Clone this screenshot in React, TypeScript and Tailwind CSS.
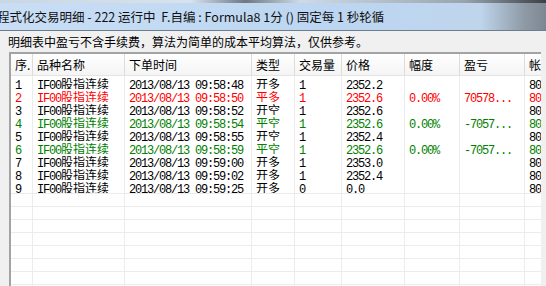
import React from 'react';

type Row = {
  no: string;
  time: string;
  kind: string;
  qty: string;
  price: string;
  range?: string;
  pnl?: string;
  color: string;
};

const rows: Row[] = [
  { no: '1', time: '2013/08/13 09:58:48', kind: '开多', qty: '1', price: '2352.2', color: 'text-black' },
  { no: '2', time: '2013/08/13 09:58:50', kind: '平多', qty: '1', price: '2352.6', range: '0.00%', pnl: '70578...', color: 'text-[#ff0000]' },
  { no: '3', time: '2013/08/13 09:58:52', kind: '开空', qty: '1', price: '2352.6', color: 'text-black' },
  { no: '4', time: '2013/08/13 09:58:54', kind: '平空', qty: '1', price: '2352.6', range: '0.00%', pnl: '-7057...', color: 'text-[#008000]' },
  { no: '5', time: '2013/08/13 09:58:55', kind: '开空', qty: '1', price: '2352.4', color: 'text-black' },
  { no: '6', time: '2013/08/13 09:58:59', kind: '平空', qty: '1', price: '2352.6', range: '0.00%', pnl: '-7057...', color: 'text-[#008000]' },
  { no: '7', time: '2013/08/13 09:59:00', kind: '开多', qty: '1', price: '2353.0', color: 'text-black' },
  { no: '8', time: '2013/08/13 09:59:02', kind: '开多', qty: '1', price: '2352.4', color: 'text-black' },
  { no: '9', time: '2013/08/13 09:59:25', kind: '开多', qty: '0', price: '0.0', color: 'text-black' },
];

const headers = ['序.', '品种名称', '下单时间', '类型', '交易量', '价格', '幅度', '盈亏', '帐'];

const cols = 'grid grid-cols-[22px_92px_127px_43px_47px_63px_55px_65px_16px]';

// latin runs in a narrow mono face, CJK runs in the CJK face
function T({ s }: { s?: string }) {
  if (!s) return null;
  const parts = s.split(/([\x00-\x7F]+)/).filter(Boolean);
  return (
    <>
      {parts.map((p, i) =>
        /^[\x00-\x7F]+$/.test(p) ? (
          <span key={i} className="font-['Liberation_Mono',monospace] text-[12px] leading-[13px] tracking-[-1.2px] whitespace-pre">
            {p}
          </span>
        ) : (
          <span key={i} className="font-['Noto_Sans_CJK_SC',sans-serif] text-[12px] leading-[13px]">
            {p}
          </span>
        )
      )}
    </>
  );
}

function Cell({ children, last }: { children?: React.ReactNode; last?: boolean }) {
  return (
    <div
      className={`h-[13px] overflow-hidden whitespace-nowrap pl-[4px] leading-[13px] ${
        last ? '' : 'border-r border-[#ececec]'
      }`}
    >
      {children}
    </div>
  );
}

export default function App() {
  return (
    <div className="h-[286px] w-[546px] overflow-hidden bg-[#f0f0f0] font-['Noto_Sans_CJK_SC',sans-serif]">
      <div className="h-[3px] bg-[linear-gradient(to_right,#c9d6e3,#d8e2ec_35%,#6f7882_45%,#cfdae6_55%,#9aa4ae_85%,#3c4046)]" />
      <div className="flex h-[27px] items-center overflow-hidden whitespace-nowrap bg-[linear-gradient(to_right,#c9def5,#bcd6f1_60%,#bfd5ec_88%,#8e9aa6_96%,#7d8792)] text-[12.5px] leading-[27px] text-[#111]">
        <span className="-ml-[3px]">程式化交易明细 - 222 运行中&nbsp;&nbsp;F.自编 : Formula8 1分 () 固定每 1 秒轮循</span>
      </div>
      <div className="h-px bg-[#6d7d8e]" />
      <div className="h-[21px] pl-[8px] text-[12px] leading-[21px] text-black">
        明细表中盈亏不含手续费，算法为简单的成本平均算法，仅供参考。
      </div>
      <div className="ml-[9px] w-[532px] border-l-2 border-t-2 border-[#a3a3a3] bg-white">
        <div className={`${cols} h-[22px] border-b border-[#e3e3e3] bg-[linear-gradient(to_bottom,#ffffff,#f4f4f4)]`}>
          {headers.map((h, i) => (
            <div
              key={h}
              className={`overflow-hidden whitespace-nowrap pl-[4px] text-[12px] leading-[21px] text-black ${
                i < headers.length - 1 ? 'border-r border-[#dcdcdc]' : ''
              }`}
            >
              {h}
            </div>
          ))}
        </div>
        {rows.map((r) => (
          <div key={r.no} className={`${cols} ${r.color}`}>
            <Cell>
              <T s={r.no} />
            </Cell>
            <Cell>
              <T s="IF00股指连续" />
            </Cell>
            <Cell>
              <T s={r.time} />
            </Cell>
            <Cell>
              <T s={r.kind} />
            </Cell>
            <Cell>
              <T s={r.qty} />
            </Cell>
            <Cell>
              <T s={r.price} />
            </Cell>
            <Cell>
              <T s={r.range} />
            </Cell>
            <Cell>
              <T s={r.pnl} />
            </Cell>
            <Cell last>
              <T s="80" />
            </Cell>
          </div>
        ))}
        {Array.from({ length: 8 }).map((_, k) => (
          <div key={k} className={`${cols} border-t border-[#ececec]`}>
            {Array.from({ length: 9 }).map((__, i) => (
              <div key={i} className={`h-[12px] ${i < 8 ? 'border-r border-[#ececec]' : ''}`} />
            ))}
          </div>
        ))}
      </div>
    </div>
  );
}
